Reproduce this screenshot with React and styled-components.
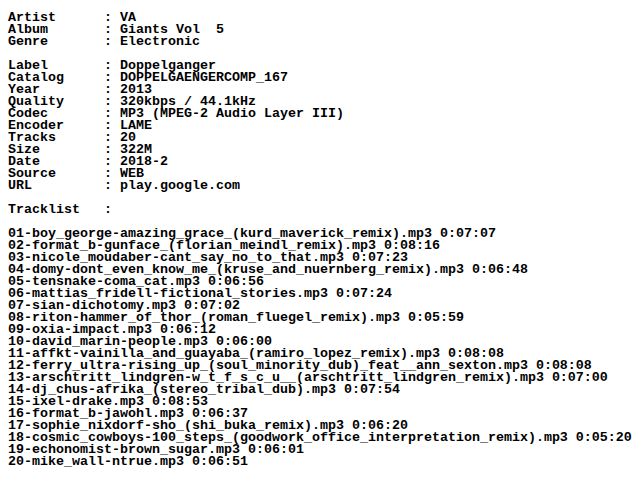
import styled, { createGlobalStyle } from 'styled-components';

const GlobalStyle = createGlobalStyle`
  html, body {
    margin: 0;
    background: #fff;
  }
`;

const Sheet = styled.div`
  padding: 12px 8px;
  font-family: 'Liberation Mono', 'DejaVu Sans Mono', monospace;
  font-size: 13.33px;
  font-weight: 700;
  line-height: 12px;
  color: #000;
  white-space: pre;
`;

const Block = styled.div`
  display: flex;
  flex-direction: column;
  margin-bottom: ${({ $gap }) => ($gap ? '12px' : '0')};
`;

const Field = styled.div`
  display: flex;
  height: 12px;
`;

const Label = styled.span`
  width: 12ch;
  flex: none;
`;

const Line = styled.div`
  height: 12px;
`;

const head = [
  ['Artist', 'VA'],
  ['Album', 'Giants Vol  5'],
  ['Genre', 'Electronic'],
];

const info = [
  ['Label', 'Doppelganger'],
  ['Catalog', 'DOPPELGAENGERCOMP_167'],
  ['Year', '2013'],
  ['Quality', '320kbps / 44.1kHz'],
  ['Codec', 'MP3 (MPEG-2 Audio Layer III)'],
  ['Encoder', 'LAME'],
  ['Tracks', '20'],
  ['Size', '322M'],
  ['Date', '2018-2'],
  ['Source', 'WEB'],
  ['URL', 'play.google.com'],
];

const tracks = [
  ['01-boy_george-amazing_grace_(kurd_maverick_remix).mp3', '0:07:07'],
  ['02-format_b-gunface_(florian_meindl_remix).mp3', '0:08:16'],
  ['03-nicole_moudaber-cant_say_no_to_that.mp3', '0:07:23'],
  ['04-domy-dont_even_know_me_(kruse_and_nuernberg_remix).mp3', '0:06:48'],
  ['05-tensnake-coma_cat.mp3', '0:06:56'],
  ['06-mattias_fridell-fictional_stories.mp3', '0:07:24'],
  ['07-sian-dichotomy.mp3', '0:07:02'],
  ['08-riton-hammer_of_thor_(roman_fluegel_remix).mp3', '0:05:59'],
  ['09-oxia-impact.mp3', '0:06:12'],
  ['10-david_marin-people.mp3', '0:06:00'],
  ['11-affkt-vainilla_and_guayaba_(ramiro_lopez_remix).mp3', '0:08:08'],
  ['12-ferry_ultra-rising_up_(soul_minority_dub)_feat__ann_sexton.mp3', '0:08:08'],
  ['13-arschtritt_lindgren-w_t_f_s_c_u__(arschtritt_lindgren_remix).mp3', '0:07:00'],
  ['14-dj_chus-afrika_(stereo_tribal_dub).mp3', '0:07:54'],
  ['15-ixel-drake.mp3', '0:08:53'],
  ['16-format_b-jawohl.mp3', '0:06:37'],
  ['17-sophie_nixdorf-sho_(shi_buka_remix).mp3', '0:06:20'],
  ['18-cosmic_cowboys-100_steps_(goodwork_office_interpretation_remix).mp3', '0:05:20'],
  ['19-echonomist-brown_sugar.mp3', '0:06:01'],
  ['20-mike_wall-ntrue.mp3', '0:06:51'],
];

const Fields = ({ rows }) => (
  <Block $gap>
    {rows.map(([k, v]) => (
      <Field key={k}>
        <Label>{k}</Label>
        <span>{`: ${v}`}</span>
      </Field>
    ))}
  </Block>
);

const App = () => (
  <>
    <GlobalStyle />
    <Sheet>
      <Fields rows={head} />
      <Fields rows={info} />
      <Block $gap>
        <Field>
          <Label>Tracklist</Label>
          <span>:</span>
        </Field>
      </Block>
      <Block>
        {tracks.map(([file, time]) => (
          <Line key={file}>{`${file} ${time}`}</Line>
        ))}
      </Block>
    </Sheet>
  </>
);

export default App;
